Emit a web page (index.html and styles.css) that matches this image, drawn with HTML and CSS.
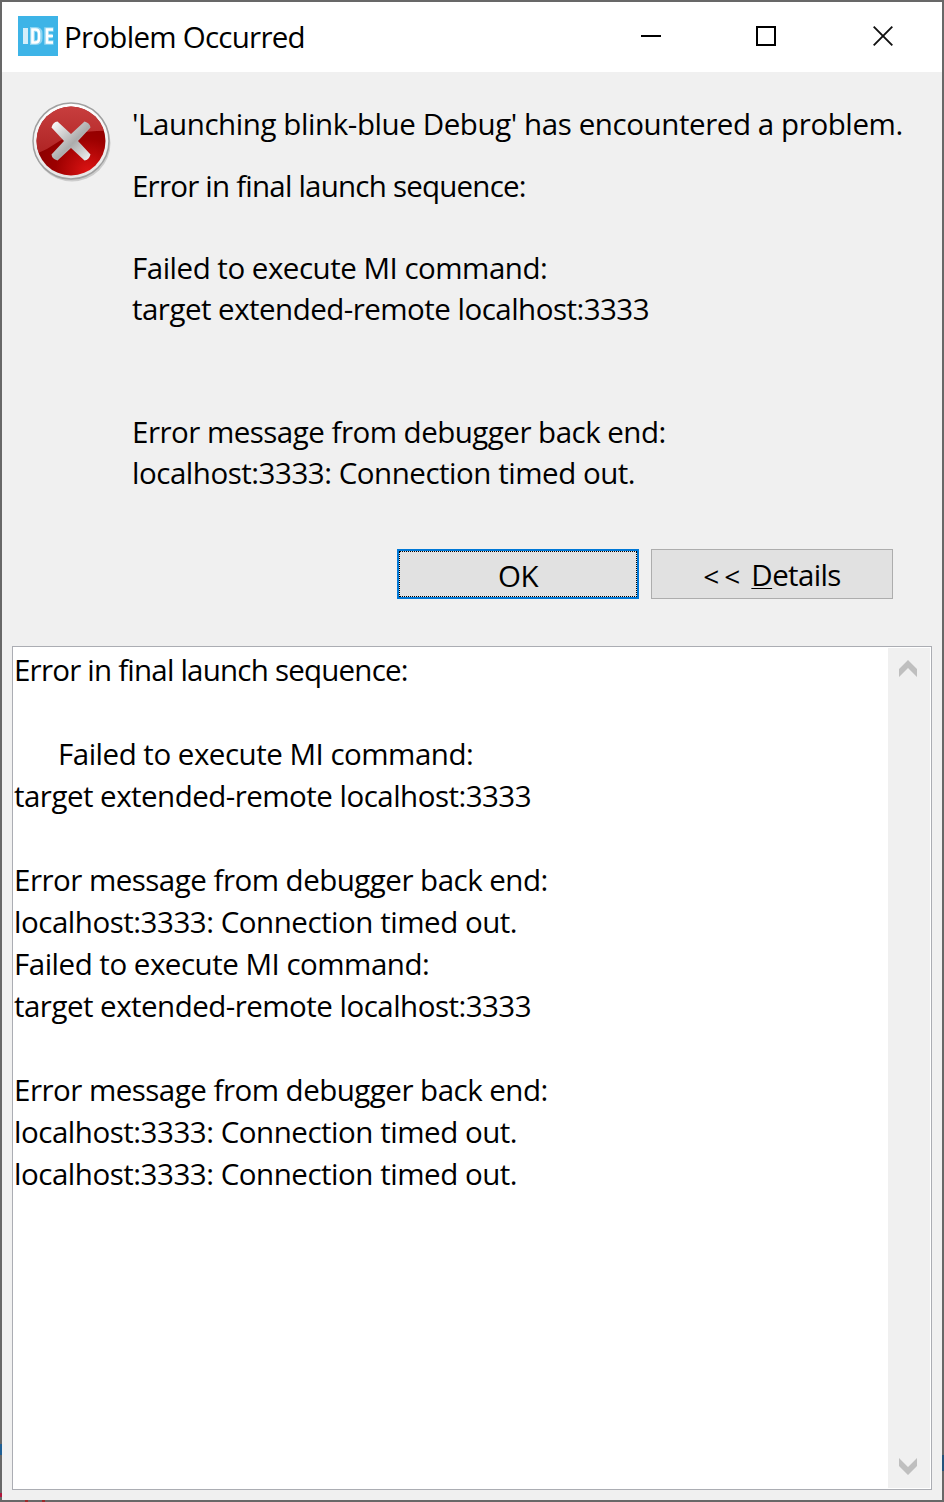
FILE: index.html
```html
<!DOCTYPE html>
<html lang="en">
<head>
<meta charset="utf-8">
<title>Problem Occurred</title>
<link rel="stylesheet" href="styles.css">
</head>
<body>
<div class="window">
  <header class="titlebar">
    <svg class="app-icon" width="40" height="40" viewBox="0 0 40 40">
      <rect width="40" height="40" fill="#3db4e7"/>
      <path d="M5 12h5v16h-5z" fill="#d3eefa"/>
      <path d="M14.500 13.500h3.500q4 0 4 4v5q0 4-4 4h-3.500z" fill="none" stroke="#8fd5f2" stroke-width="5"/>
      <path d="M14.500 13.500h3q3.500 0 3.500 4v5q0 4-3.500 4h-3z" fill="none" stroke="#fff" stroke-width="2.600"/>
      <path d="M35.500 13.500h-7v13h7M28.500 20h6" fill="none" stroke="#8fd5f2" stroke-width="4.600"/>
      <path d="M35 13.500h-6v13h6M29 20h6" fill="none" stroke="#fff" stroke-width="2.600"/>
    </svg>
    <h1 class="title">Problem Occurred</h1>
    <div class="controls">
      <svg width="20" height="20" viewBox="0 0 20 20"><path d="M0 10h20" stroke="#000" stroke-width="2"/></svg>
      <svg width="20" height="20" viewBox="0 0 20 20"><path d="M1 1h18v18H1z" fill="none" stroke="#000" stroke-width="2"/></svg>
      <svg width="20" height="20" viewBox="0 0 20 20"><path d="M.7.7l18.600 18.600M19.300.7L.7 19.300" stroke="#111" stroke-width="1.900"/></svg>
    </div>
  </header>
  <section class="message">
    <svg class="error-icon" width="84" height="84" viewBox="0 0 84 84">
      <defs>
        <linearGradient id="ring" x1="0" y1="0" x2="0" y2="1"><stop offset="0" stop-color="#fff"/><stop offset="1" stop-color="#e6e6e6"/></linearGradient>
        <radialGradient id="red" cx=".75" cy=".95" r=".8"><stop offset="0" stop-color="#de1414"/><stop offset=".6" stop-color="#9c0000"/><stop offset="1" stop-color="#8a0000"/></radialGradient>
        <linearGradient id="gloss" x1="0" y1="0" x2="0" y2="1"><stop offset="0" stop-color="#d95050"/><stop offset="1" stop-color="#b52a2a"/></linearGradient>
        <linearGradient id="cross" x1="0" y1="0" x2="1" y2="1"><stop offset="0" stop-color="#fff"/><stop offset=".55" stop-color="#acacac"/><stop offset="1" stop-color="#f4f4f4"/></linearGradient>
        <clipPath id="disc"><circle cx="41" cy="41" r="34.500"/></clipPath>
      </defs>
      <circle cx="42" cy="43" r="38.500" fill="#b8b8b8" opacity=".65"/>
      <circle cx="41" cy="41" r="38" fill="url(#ring)" stroke="#a0a0a0" stroke-width="1.500"/>
      <circle cx="41" cy="41" r="34.500" fill="url(#red)"/>
      <path clip-path="url(#disc)" d="M0 56Q14 52 28 42Q46 29 84 31V0H0z" fill="url(#gloss)" opacity=".82"/>
      <path d="M27.500 21.500L41 34 54.500 21.500Q60 23 60.500 27.500L48 41 60.500 54.500Q59 60 54.500 60.500L41 48 27.500 60.500Q22 59 21.500 54.500L34 41 21.500 27.500Q23 22 27.500 21.500z" fill="url(#cross)"/>
    </svg>
    <div class="message-text">
      <p class="line summary">'Launching blink-blue Debug' has encountered a problem.</p>
      <div class="reason">
        <p class="line seq">Error in final launch sequence:</p>
        <p class="line">&nbsp;</p>
        <p class="line fail">Failed to execute MI command:</p>
        <p class="line target">target extended-remote localhost:3333</p>
        <p class="line">&nbsp;</p>
        <p class="line">&nbsp;</p>
        <p class="line back">Error message from debugger back end:</p>
        <p class="line conn">localhost:3333: Connection timed out.</p>
      </div>
    </div>
  </section>
  <div class="buttons">
    <button class="button primary"><span class="focus">OK</span></button>
    <button class="button"><span class="arrows">&lt;&lt;</span><span class="label"><span class="mnemonic">D</span>etails</span></button>
  </div>
  <section class="details">
    <div class="details-text">
      <p class="line seq">Error in final launch sequence:</p>
      <p class="line">&nbsp;</p>
      <p class="line fail indent">Failed to execute MI command:</p>
      <p class="line target">target extended-remote localhost:3333</p>
      <p class="line">&nbsp;</p>
      <p class="line back">Error message from debugger back end:</p>
      <p class="line conn">localhost:3333: Connection timed out.</p>
      <p class="line fail">Failed to execute MI command:</p>
      <p class="line target">target extended-remote localhost:3333</p>
      <p class="line">&nbsp;</p>
      <p class="line back">Error message from debugger back end:</p>
      <p class="line conn">localhost:3333: Connection timed out.</p>
      <p class="line conn">localhost:3333: Connection timed out.</p>
    </div>
    <div class="scrollbar">
      <svg width="18" height="17" viewBox="0 0 18 17"><path d="M9 0l9 9v8L9 8 0 17V9z" fill="#bfbfbf"/></svg>
      <svg width="18" height="17" viewBox="0 0 18 17"><path d="M9 17l9-9V0L9 9 0 0v8z" fill="#bfbfbf"/></svg>
    </div>
  </section>
</div>
</body>
</html>
```
FILE: styles.css
```css
* { box-sizing: border-box; }
body {
  margin: 0;
  font-family: "Open Sans", "Noto Sans", sans-serif;
  font-size: 29.5px;
  color: #000;
}
p, h1 { margin: 0; font-size: inherit; font-weight: 400; white-space: nowrap; }
svg { display: block; }

.window {
  width: 944px;
  height: 1502px;
  border: 2px solid transparent;
  background:
    linear-gradient(#f0f0f0, #f0f0f0) padding-box,
    linear-gradient(#1f5f94, #1f5f94) 0 1444px / 2px 11px no-repeat border-box,
    linear-gradient(#b0153c, #b0153c) 0 1493px / 2px 4px no-repeat border-box,
    linear-gradient(#24527a, #24527a) 942px 1455px / 2px 16px no-repeat border-box,
    linear-gradient(#9c2a2a, #9c2a2a) 25px 1500px / 3px 2px no-repeat border-box,
    linear-gradient(#9c2a2a, #9c2a2a) 42px 1500px / 3px 2px no-repeat border-box,
    linear-gradient(#686868, #686868) border-box;
  display: flex;
  flex-direction: column;
}
.titlebar {
  height: 70px;
  background: #fff;
  display: flex;
  align-items: center;
  padding: 0 49px 2px 16px;
}
.title { margin-left: 6px; line-height: 40px; padding-top: 1px; letter-spacing: -.73px; }
.controls { margin-left: auto; display: flex; gap: 97px; }
.controls svg:first-child { margin-right: -2px; }
.message { display: flex; padding: 28px 0 0 28px; }
.message-text { margin-left: 18px; padding-top: 3px; }
.line { line-height: 41px; height: 41px; white-space: pre; }
.summary { letter-spacing: -.41px; }
.seq { letter-spacing: -.78px; }
.fail { letter-spacing: -.49px; }
.target { letter-spacing: -.52px; }
.back { letter-spacing: -.51px; }
.conn { letter-spacing: -.47px; }
.reason { margin-top: 21px; }
.buttons {
  display: flex;
  justify-content: flex-end;
  gap: 12px;
  padding: 56px 49px 0 0;
}
.button {
  width: 242px;
  height: 50px;
  padding: 0;
  border: 1px solid #adadad;
  background: #e1e1e1;
  font: inherit;
  color: inherit;
  display: flex;
  align-items: center;
  justify-content: center;
}
.primary { border: 2px solid #0078d7; }
.focus { width: 100%; height: 100%; border: 1px dotted #000; line-height: 47px; letter-spacing: -.5px; }
.button .label { line-height: 50px; padding-top: 2px; letter-spacing: -.65px; }
.arrows { font-size: 28px; margin-right: 6px; letter-spacing: 5px; padding-top: 3px; }
.mnemonic { text-decoration: underline; text-decoration-thickness: 1px; text-underline-offset: 2px; text-decoration-skip-ink: none; }
.details {
  width: 920px;
  height: 844px;
  margin: 47px 0 0 10px;
  border: 1px solid #abadb3;
  background: #fff;
  display: flex;
  justify-content: space-between;
  padding: 1px;
}
.details-text { padding-top: 1px; }
.details .line { line-height: 42px; height: 42px; }
.indent { padding-left: 44px; }
.scrollbar {
  width: 42px;
  background: #f0f0f0;
  display: flex;
  flex-direction: column;
  justify-content: space-between;
  padding: 12px 0 13px 11px;
}
```
